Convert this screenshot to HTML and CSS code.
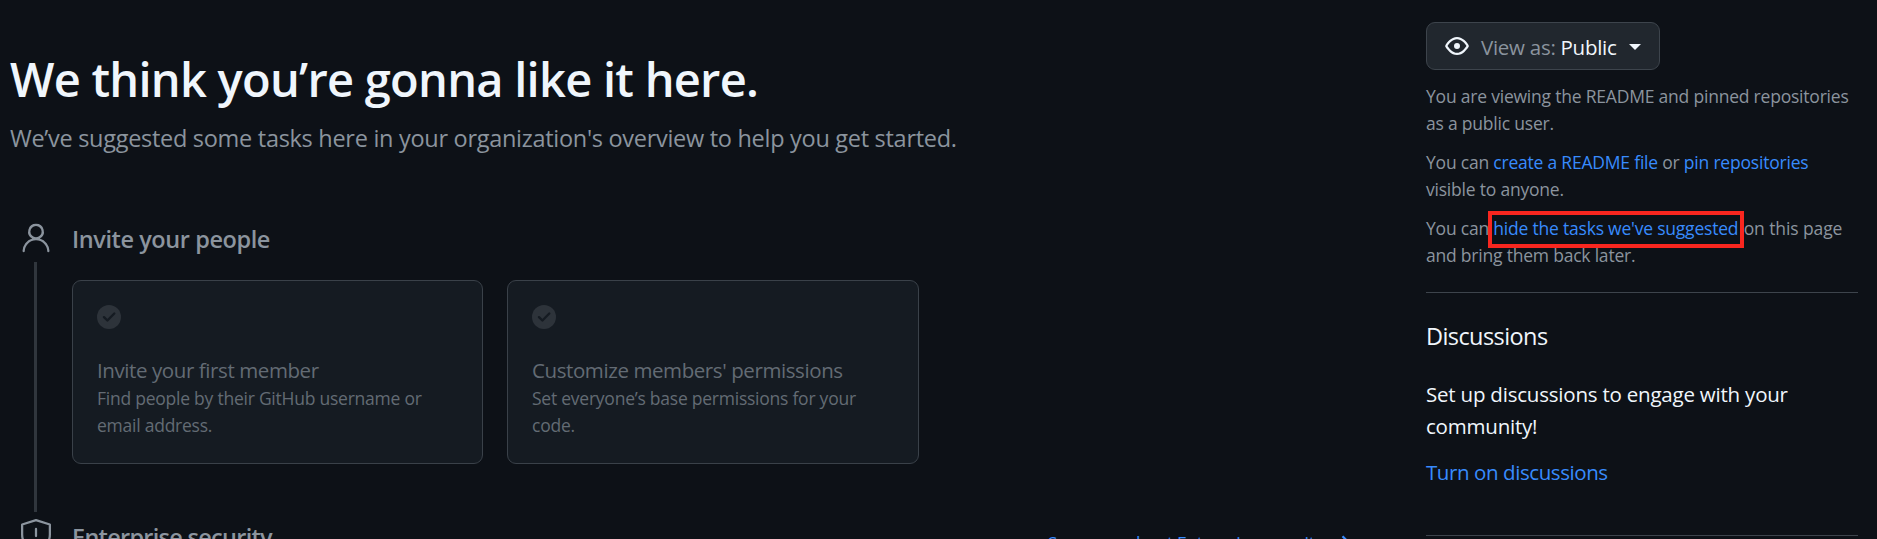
FILE: index.html
```html
<!DOCTYPE html>
<html lang="en">
<head>
<meta charset="utf-8">
<title>Organization overview</title>
<link rel="stylesheet" href="styles.css">
</head>
<body>
<div class="page">
<main class="overview">
  <h1 class="title">We think you’re gonna like it here.</h1>
  <p class="lead">We’ve suggested some tasks here in your organization's overview to help you get started.</p>
  <section class="step">
    <div class="rail">
      <svg class="step-icon" viewBox="0 0 24 24"><path d="M12 2.500a5.250 5.250 0 00-2.519 9.857 9.005 9.005 0 00-6.477 8.370.750.750 0 00.727.773H3.750a.750.750 0 00.750-.727 7.505 7.505 0 0115 0 .750.750 0 001.500-.046 9.005 9.005 0 00-6.477-8.370A5.250 5.250 0 0012 2.500zm-3.750 5.250a3.750 3.750 0 117.500 0 3.750 3.750 0 01-7.500 0z"/></svg>
      <div class="line"></div>
    </div>
    <div class="step-body">
      <h2 class="step-title">Invite your people</h2>
      <div class="cards">
        <article class="card">
          <svg class="check" viewBox="0 0 24 24"><circle cx="12" cy="12" r="12"/><path d="M7 12.200l3.400 3.300 6.900-7"/></svg>
          <h3 class="card-title">Invite your first member</h3>
          <p class="card-text">Find people by their GitHub username or<br>email address.</p>
        </article>
        <article class="card card-wide">
          <svg class="check" viewBox="0 0 24 24"><circle cx="12" cy="12" r="12"/><path d="M7 12.200l3.400 3.300 6.900-7"/></svg>
          <h3 class="card-title">Customize members' permissions</h3>
          <p class="card-text">Set everyone’s base permissions for your<br>code.</p>
        </article>
      </div>
    </div>
  </section>
  <section class="step">
    <div class="rail">
      <svg class="step-icon" viewBox="0 0 24 24"><path d="M12 1.400L21.250 4.300V11c0 5.200-3.500 9-9.250 11.400C6.250 20 2.750 16.200 2.750 11V4.300z" class="stroke"/><path d="M12 7.300v4.700" class="stroke"/></svg>
    </div>
    <div class="step-body step-head">
      <h2 class="step-title step-title-tight">Enterprise security</h2>
      <a class="more">See more about Enterprise security <svg class="arrow" viewBox="0 0 16 16"><path d="M2 8h11M9 3.500L13.500 8 9 12.500"/></svg></a>
    </div>
  </section>
</main>
<aside class="sidebar">
  <button class="view-as">
    <svg class="eye" viewBox="0 0 16 16"><path d="M1.679 7.932c.412-.621 1.242-1.750 2.366-2.717C5.175 4.242 6.527 3.500 8 3.500c1.473 0 2.824.742 3.955 1.715 1.124.967 1.954 2.096 2.366 2.717a.119.119 0 010 .136c-.412.621-1.242 1.750-2.366 2.717C10.825 11.758 9.473 12.500 8 12.500c-1.473 0-2.824-.742-3.955-1.715C2.920 9.818 2.090 8.690 1.679 8.068a.119.119 0 010-.136zM8 2c-1.981 0-3.670.992-4.933 2.078C1.797 5.169.880 6.423.430 7.100a1.619 1.619 0 000 1.798c.450.678 1.367 1.932 2.637 3.024C4.329 13.008 6.019 14 8 14c1.981 0 3.670-.992 4.933-2.078 1.270-1.091 2.187-2.345 2.637-3.023a1.619 1.619 0 000-1.798c-.450-.678-1.367-1.932-2.637-3.023C11.671 2.992 9.981 2 8 2zm0 8a2 2 0 100-4 2 2 0 000 4z"/></svg>
    <span class="view-label">View as: <span class="view-value">Public</span></span>
    <span class="caret"></span>
  </button>
  <div class="note">
    <p>You are viewing the README and pinned repositories<br>as a public user.</p>
    <p>You can <a>create a README file</a> or <a>pin repositories</a><br>visible to anyone.</p>
    <p>You can <a class="marked">hide the tasks we've suggested</a> <span class="note-tail">on this page</span><br>and bring them back later.</p>
  </div>
  <section class="discussions">
    <h2>Discussions</h2>
    <p>Set up discussions to engage with your<br>community!</p>
    <a class="turn-on">Turn on discussions</a>
  </section>
</aside>
</div>
</body>
</html>
```
FILE: styles.css
```css
* { box-sizing: border-box; margin: 0; padding: 0; }
html { height: 539px; overflow: hidden; }
body { width: 1877px; height: 539px; overflow: hidden; background: #0d1117; color: #8b949e; font-family: "Open Sans", "Noto Sans", sans-serif; font-size: 17.500px; letter-spacing: -0.210px; }
a { color: #388bfd; text-decoration: none; }
h1, h2, h3 { font-weight: 400; }
.page { display: flex; justify-content: space-between; height: 539px; overflow: hidden; padding: 0 19px 0 10px; }
.overview { width: 1343px; padding-top: 43px; }
.title { font-size: 47px; line-height: 72px; font-weight: 600; letter-spacing: -0.740px; color: #f0f6fc; }
.lead { margin-top: 5px; font-size: 23.500px; line-height: 36px; letter-spacing: -0.290px; }
.step { display: flex; gap: 11px; height: 298px; }
.lead + .step { margin-top: 65px; }
.rail { width: 51px; display: flex; flex-direction: column; align-items: center; margin-top: -1px; }
.step-icon { width: 36px; height: 36px; margin-left: 1px; fill: #8b949e; }
.stroke { fill: none; stroke: #8b949e; stroke-width: 1.500; stroke-linecap: round; stroke-linejoin: round; }
.line { width: 3px; height: 250px; margin-top: 6px; background: #30363d; }
.step-body { flex: 1; }
.step-title { font-size: 23.500px; line-height: 36px; font-weight: 600; letter-spacing: -0.420px; }
.step-title-tight { letter-spacing: -0.720px; }
.step-head { display: flex; justify-content: space-between; }
.more { display: flex; align-items: center; gap: 6px; height: 36px; margin-top: 6px; line-height: 32px; letter-spacing: -0.350px; }
.arrow { width: 24px; height: 24px; fill: none; stroke: #388bfd; stroke-width: 1.500; }
.cards { display: flex; gap: 24px; margin-top: 23px; }
.card { width: 411px; height: 184px; padding: 24px; border: 1px solid #3a4149; border-radius: 9px; background: #151b22; color: #636b74; }
.card-wide { width: 412px; }
.check { display: block; width: 24px; height: 24px; fill: #2d333a; }
.check path { fill: none; stroke: #151b22; stroke-width: 2.400; stroke-linecap: round; stroke-linejoin: round; }
.card-title { margin-top: 26px; font-size: 20.500px; line-height: 30px; letter-spacing: -0.410px; }
.card-text { line-height: 27px; letter-spacing: -0.240px; white-space: nowrap; }
.sidebar { width: 432px; padding-top: 22px; white-space: nowrap; }
.view-as { display: flex; align-items: center; width: 234px; height: 48px; padding: 0 18px; border: 1px solid #3d444c; border-radius: 9px; background: #21272e; color: #8b949e; font: inherit; font-size: 20.500px; letter-spacing: -0.270px; }
.eye { flex: none; width: 24px; height: 24px; margin-right: 12px; fill: #f0f6fc; }
.view-label { padding-top: 2px; }
.view-value { color: #f0f6fc; }
.caret { margin: 2px 0 0 12px; border: 6px solid transparent; border-top-color: #f0f6fc; border-bottom: 0; }
.note { display: flex; flex-direction: column; gap: 12px; margin-top: 13px; padding-bottom: 23px; border-bottom: 1px solid #3d444c; line-height: 27px; }
.marked { padding: 1px 2px 4px 1px; margin: 0 -2px 0 -1px; outline: 4px solid #f8261f; }
.note-tail { margin-left: 1px; letter-spacing: -0.100px; }
.discussions { height: 243px; padding-top: 25px; border-bottom: 1px solid #3d444c; color: #f0f6fc; font-size: 20.500px; line-height: 31.500px; }
.discussions h2 { font-size: 23.500px; line-height: 36px; letter-spacing: -0.580px; }
.discussions p { margin: 25px 0 15px; }
.turn-on { letter-spacing: -0.420px; }
```
